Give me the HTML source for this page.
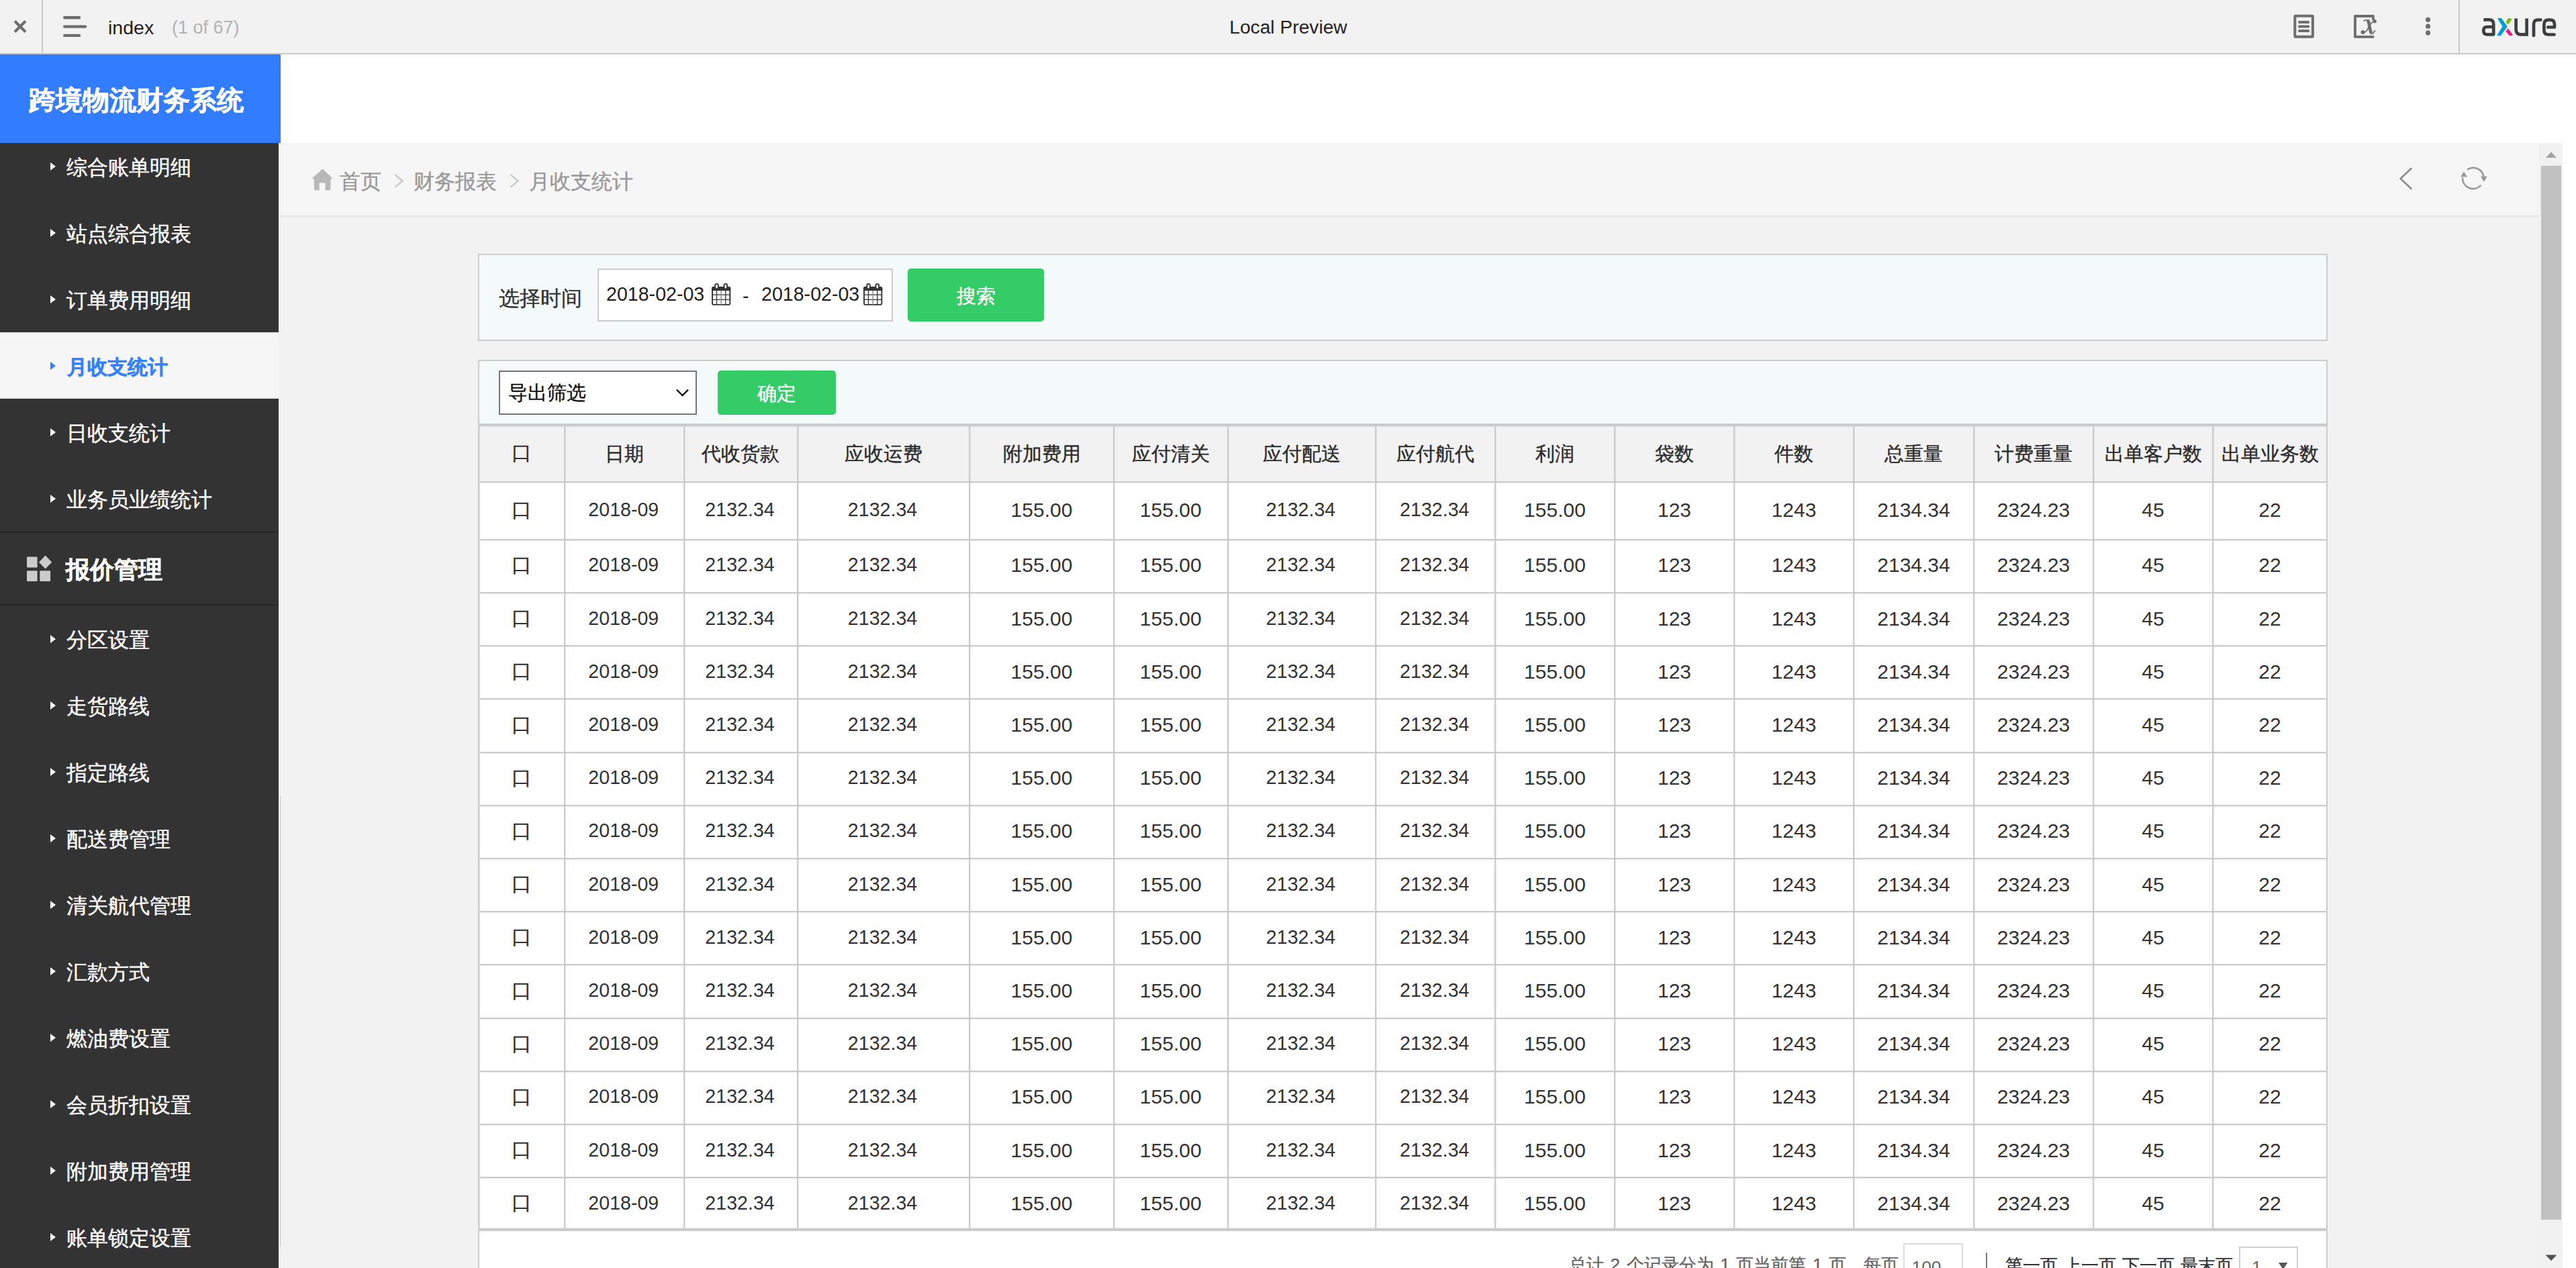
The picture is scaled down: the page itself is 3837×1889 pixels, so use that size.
<!DOCTYPE html><html lang="zh"><head><meta charset="utf-8"><title>index</title><style>
*{box-sizing:border-box;margin:0;padding:0}
html,body{width:3837px;height:1889px;overflow:hidden;background:#fff}
body{position:relative;font-family:"Liberation Sans",sans-serif;color:#333;-webkit-font-smoothing:antialiased}
.a{position:absolute}
.t{position:absolute;white-space:nowrap;line-height:1}
.c{text-align:center}
.mi{position:absolute;left:0;width:415px;height:99px}
.mi .tx{position:absolute;left:99px;top:36px;font-size:30.8px;line-height:31px;color:#fff;white-space:nowrap;-webkit-text-stroke-width:0.4px}
.mi .ar{position:absolute;left:75px;top:44px;width:0;height:0;border-left:8px solid #fff;border-top:6.5px solid transparent;border-bottom:6.5px solid transparent}
.mi.act{background:#f6f6f6;border-bottom:2px solid #e6e6e6}
.mi.act .tx{color:#3381ff;font-weight:bold;left:100px;font-size:30.4px}
.mi.act .ar{border-left-color:#3381ff}
.hl{position:absolute;height:2px;background:#cccccc}
.vl{position:absolute;width:2px;background:#cccccc}
.cell{position:absolute;text-align:center;white-space:nowrap;color:#333}
.cb{font-size:30px;-webkit-text-stroke-width:0.3px}
.k{-webkit-text-stroke-width:0.35px}
.k5{-webkit-text-stroke-width:0.5px}
.ar1{font-size:28.6px}
.yh{font-size:30px}
.hd{font-size:28.6px;color:#2b2b2b;-webkit-text-stroke-width:0.35px}
</style></head><body>
<div class="a" style="left:0;top:0;width:3837px;height:79px;background:#f2f2f2"></div>
<div class="a" style="left:0;top:79px;width:3837px;height:2px;background:#c8c8c8"></div>
<div class="a" style="left:62px;top:0;width:2px;height:79px;background:#c8c8c8"></div>
<div class="a" style="left:3662px;top:0;width:2px;height:79px;background:#c8c8c8"></div>
<svg class="a" style="left:16px;top:24.6px" width="28" height="28" viewBox="0 0 28 28"><path d="M6 6.5 L22 22.5 M22 6.5 L6 22.5" stroke="#6e6e6e" stroke-width="4.2" fill="none"/></svg>
<svg class="a" style="left:90px;top:20px" width="44" height="40" viewBox="0 0 44 40"><g stroke="#6e6e6e" stroke-width="4.4" stroke-linecap="round"><path d="M6.2 6.3H28"/><path d="M6.2 19.6H37"/><path d="M6.2 32.9H28"/></g></svg>
<div class="t" style="left:161px;top:25px;font-size:28.5px;line-height:32px;color:#222">index</div>
<div class="t" style="left:256px;top:25px;font-size:27px;line-height:32px;color:#b3b3b3">(1 of 67)</div>
<div class="t c" style="left:1719px;width:400px;top:24px;font-size:28.2px;line-height:32px;color:#222">Local Preview</div>
<svg class="a" style="left:3412px;top:18px" width="40" height="44" viewBox="0 0 40 44"><rect x="6.3" y="5.8" width="26.6" height="31" rx="1" fill="none" stroke="#6e6e6e" stroke-width="4"/><g stroke="#6e6e6e" stroke-width="4" stroke-linecap="round"><path d="M13 14.9H26.2"/><path d="M13 21.55H26.2"/><path d="M13 27.95H26.2"/></g></svg>
<svg class="a" style="left:3496px;top:14px" width="60" height="50" viewBox="0 0 60 50">
<path d="M38.9 14.5 V10 H11.95 V40.9 H38.7" fill="none" stroke="#6e6e6e" stroke-width="3.8" stroke-linejoin="round" stroke-linecap="round"/>
<g fill="none" stroke="#6e6e6e">
<path d="M24.4 16.8 Q28 16.7 30.6 15.7" stroke-width="1.8"/>
<path d="M30.9 15.6 C33.2 20 33.2 27 35.7 35.2" stroke-width="4.7"/>
<path d="M34.6 35.4 Q37.6 38.4 41.7 31.2" stroke-width="1.9"/>
<path d="M41 17.4 C37 18 34.6 22 32.6 26 C30.2 30.6 28 34.8 23.6 34.6" stroke-width="1.8"/>
</g>
<circle cx="41.2" cy="17.8" r="2.7" fill="#6e6e6e"/><circle cx="23.4" cy="34.1" r="3" fill="#6e6e6e"/>
</svg>
<svg class="a" style="left:3608px;top:20px" width="18" height="40" viewBox="0 0 18 40"><g fill="#6e6e6e"><circle cx="8.5" cy="9.3" r="3.6"/><circle cx="8.5" cy="19.2" r="3.6"/><circle cx="8.5" cy="28.9" r="3.6"/></g></svg>
<svg class="a" style="left:3694px;top:22px" width="122" height="38" viewBox="0 0 122 38">
<g fill="none" stroke="#3d3f40" stroke-width="4.7" stroke-linejoin="round">
<path d="M5.4 7.3 H13.6 Q20.2 7.3 20.2 14 V29.3 H10.6 Q5.2 29.3 5.2 23.6 Q5.2 18 10.6 18 H20"/>
<path d="M53.6 5.5 V22 Q53.6 29.4 61 29.4 H69.6 M69.6 5.5 V31.7"/>
<path d="M80 31 V14 Q80 7.6 86.4 7.6 H90.4" stroke-linecap="round"/>
<path d="M110.6 29.5 H102 Q95.4 29.5 95.4 23 V14.2 Q95.4 7.6 102 7.6 H104.4 Q111 7.6 111 14.2 V18.5 H101.2" stroke-linecap="round"/>
</g>
<path d="M26.8 5.5 H31.7 L40.3 17.5 L30.7 30.7 H25.8 L33.9 17.5 Z" fill="#009cd9" stroke="#009cd9" stroke-width="1" stroke-linejoin="round"/>
<path d="M47.1 6.5 L42.5 5.4 L39 10.5 L41.9 14.1 Z" fill="#74bb11" stroke="#74bb11" stroke-width="1" stroke-linejoin="round"/>
<path d="M41.7 20.9 L39 24.3 L43.7 30.7 L48.1 30.4 L47.9 29 Z" fill="#eb2084" stroke="#eb2084" stroke-width="1" stroke-linejoin="round"/>
</svg>
<div class="a" style="left:415px;top:213px;width:3367px;height:1676px;background:#f2f2f2"></div>
<div class="a" style="left:418px;top:213px;width:3364px;height:108px;background:#f6f6f6"></div>
<div class="a" style="left:418px;top:321px;width:3364px;height:2px;background:#e6e6e6"></div>
<div class="a" style="left:417px;top:1186px;width:1px;height:671px;background:#c6c6c6"></div>
<div class="a" style="left:0;top:213px;width:415px;height:1676px;background:#333;overflow:hidden">
<div class="mi" style="top:-15px"><div class="ar"></div><div class="tx">综合账单明细</div></div>
<div class="mi" style="top:84px"><div class="ar"></div><div class="tx">站点综合报表</div></div>
<div class="mi" style="top:183px"><div class="ar"></div><div class="tx">订单费用明细</div></div>
<div class="mi act" style="top:282px"><div class="a" style="left:0;top:1px;width:415px;height:1px;background:#e6e6e6"></div><div class="ar"></div><div class="tx">月收支统计</div></div>
<div class="mi" style="top:381px"><div class="ar"></div><div class="tx">日收支统计</div></div>
<div class="mi" style="top:480px"><div class="ar"></div><div class="tx">业务员业绩统计</div></div>
<div class="a" style="left:0;top:579px;width:415px;height:2px;background:#262626"></div>
<div class="a" style="left:0;top:687px;width:415px;height:2px;background:#262626"></div>
<svg class="a" style="left:38px;top:612px" width="42" height="44" viewBox="0 0 42 44"><g fill="#cbcbcb"><rect x="2" y="4.4" width="15.6" height="16" rx="1"/><rect x="2" y="25.3" width="15.6" height="15.8" rx="1"/><rect x="21.3" y="25.3" width="15.8" height="15.8" rx="1"/><path d="M29.6 2.6 L39.2 12.6 L29.6 22.4 L20 12.6 Z"/></g></svg>
<div class="t k5" style="left:98px;top:618px;font-size:35.8px;line-height:36px;font-weight:bold;color:#fff">报价管理</div>
<div class="mi" style="top:689px"><div class="ar"></div><div class="tx">分区设置</div></div>
<div class="mi" style="top:788px"><div class="ar"></div><div class="tx">走货路线</div></div>
<div class="mi" style="top:887px"><div class="ar"></div><div class="tx">指定路线</div></div>
<div class="mi" style="top:986px"><div class="ar"></div><div class="tx">配送费管理</div></div>
<div class="mi" style="top:1085px"><div class="ar"></div><div class="tx">清关航代管理</div></div>
<div class="mi" style="top:1184px"><div class="ar"></div><div class="tx">汇款方式</div></div>
<div class="mi" style="top:1283px"><div class="ar"></div><div class="tx">燃油费设置</div></div>
<div class="mi" style="top:1382px"><div class="ar"></div><div class="tx">会员折扣设置</div></div>
<div class="mi" style="top:1481px"><div class="ar"></div><div class="tx">附加费用管理</div></div>
<div class="mi" style="top:1580px"><div class="ar"></div><div class="tx">账单锁定设置</div></div>
</div>
<div class="a" style="left:0;top:81px;width:418px;height:132px;background:#317cff"></div>
<div class="t k5" style="left:43px;top:128px;font-size:39.8px;line-height:42px;font-weight:bold;color:#fff">跨境物流财务系统</div>
<svg class="a" style="left:462px;top:250px" width="36" height="36" viewBox="0 0 36 36"><path d="M17.5 2.6 Q18.6 1.6 19.7 2.6 L32.6 15.2 Q33.4 16.4 32 16.6 H30.4 V31.2 Q30.4 33.6 28 33.6 H22.6 V22.6 H13.6 V33.6 H8 Q5.8 33.6 5.8 31.2 V16.6 H4 Q2.6 16.4 3.4 15.2 Z" fill="#b8b8b8"/></svg>
<div class="t k" style="left:506px;top:255px;font-size:30.8px;line-height:32px;color:#999">首页</div>
<svg class="a" style="left:584px;top:256px" width="20" height="28" viewBox="0 0 20 28"><path d="M4.5 4 L15.5 13.6 L4.5 23" fill="none" stroke="#cfcfcf" stroke-width="2.8"/></svg>
<div class="t k" style="left:616px;top:255px;font-size:30.8px;line-height:32px;color:#999">财务报表</div>
<svg class="a" style="left:756px;top:256px" width="20" height="28" viewBox="0 0 20 28"><path d="M4.5 4 L15.5 13.6 L4.5 23" fill="none" stroke="#cfcfcf" stroke-width="2.8"/></svg>
<div class="t k" style="left:788px;top:255px;font-size:30.8px;line-height:32px;color:#999">月收支统计</div>
<svg class="a" style="left:3568px;top:244px" width="30" height="44" viewBox="0 0 30 44"><path d="M23.4 7.2 L7.6 22 L23.4 37" fill="none" stroke="#8c8c8c" stroke-width="2.6" stroke-linecap="round" stroke-linejoin="round"/></svg>
<svg class="a" style="left:3660px;top:244px" width="50" height="44" viewBox="0 0 50 44">
<g fill="none" stroke="#999" stroke-width="2.7" stroke-linecap="round">
<path d="M16 8.2 A15.6 15.6 0 0 1 39.4 19"/>
<path d="M8 21.8 A15.6 15.6 0 0 0 34.6 32.6"/>
</g>
<path d="M5.1 19.6 L15 19.6 L9.8 11.5 Z" fill="#999"/>
<path d="M34.9 19 L44.7 19 L39.9 26.8 Z" fill="#999"/>
</svg>
<div class="a" style="left:3782px;top:213px;width:35px;height:1676px;background:#f1f1f1"></div>
<div class="a" style="left:3785px;top:247px;width:30px;height:1570px;background:#c1c1c1"></div>
<svg class="a" style="left:3782px;top:213px" width="35" height="35" viewBox="0 0 35 35"><path d="M10 22 L18 13.6 L26 22 Z" fill="#a3a3a3"/></svg>
<svg class="a" style="left:3782px;top:1854px" width="35" height="35" viewBox="0 0 35 35"><path d="M9.6 15.4 L26.4 15.4 L18 24.2 Z" fill="#505050"/></svg>
<div class="a" style="left:712px;top:378px;width:2755px;height:130px;background:#f4fafa;border:2px solid #cccccc"></div>
<div class="t k" style="left:743px;top:429px;font-size:30.8px;line-height:32px;color:#333">选择时间</div>
<div class="a" style="left:890px;top:400px;width:440px;height:79px;background:#fff;border:2px solid #cccccc"></div>
<div class="t" style="left:903px;top:422px;font-size:28.6px;line-height:32px;color:#222">2018-02-03</div>
<div class="t" style="left:1106px;top:425px;font-size:28.6px;line-height:32px;color:#222">-</div>
<div class="t" style="left:1134px;top:422px;font-size:28.6px;line-height:32px;color:#222">2018-02-03</div>
<svg class="a" style="left:1059px;top:420px" width="32" height="36" viewBox="0 0 32 36">
<rect x="2.05" y="7.95" width="26.3" height="25.9" rx="2.2" fill="#fff" stroke="#333" stroke-width="1.9"/>
<path d="M1.1 13 V9.4 Q1.1 7 3.5 7 H26.9 Q29.3 7 29.3 9.4 V13 Z" fill="#333"/>
<g stroke="#333" stroke-width="1.3"><path d="M8.5 13V34M21.8 13V34M2 19.2H28.4M2 26.3H28.4"/></g>
<path d="M15.2 13V34" stroke="#8a8a8a" stroke-width="1.4"/>
<g stroke="#333" stroke-width="1.9" fill="#fff"><rect x="6.25" y="2.85" width="4.6" height="7.6" rx="2.3"/><rect x="19.5" y="2.85" width="4.6" height="7.6" rx="2.3"/></g>
</svg>
<svg class="a" style="left:1285px;top:420px" width="32" height="36" viewBox="0 0 32 36">
<rect x="2.05" y="7.95" width="26.3" height="25.9" rx="2.2" fill="#fff" stroke="#333" stroke-width="1.9"/>
<path d="M1.1 13 V9.4 Q1.1 7 3.5 7 H26.9 Q29.3 7 29.3 9.4 V13 Z" fill="#333"/>
<g stroke="#333" stroke-width="1.3"><path d="M8.5 13V34M21.8 13V34M2 19.2H28.4M2 26.3H28.4"/></g>
<path d="M15.2 13V34" stroke="#8a8a8a" stroke-width="1.4"/>
<g stroke="#333" stroke-width="1.9" fill="#fff"><rect x="6.25" y="2.85" width="4.6" height="7.6" rx="2.3"/><rect x="19.5" y="2.85" width="4.6" height="7.6" rx="2.3"/></g>
</svg>
<div class="a" style="left:1352px;top:400px;width:203px;height:79px;background:#33cc66;border-radius:5px"></div>
<div class="t c k" style="left:1352px;width:203px;top:425px;font-size:28.6px;line-height:32px;color:#fff">搜索</div>
<div class="a" style="left:712px;top:536px;width:2755px;height:98px;background:#f4fafa;border:2px solid #cccccc"></div>
<div class="a" style="left:743px;top:552px;width:295px;height:66px;background:#fff;border:2px solid #767676;border-radius:0"></div>
<div class="t k" style="left:757px;top:569px;font-size:28.6px;line-height:32px;color:#111">导出筛选</div>
<svg class="a" style="left:1003px;top:574px" width="28" height="22" viewBox="0 0 28 22"><path d="M5 6.6 L13.6 15 L22 6.6" fill="none" stroke="#111" stroke-width="2.4"/></svg>
<div class="a" style="left:1069px;top:552px;width:176px;height:66px;background:#33cc66;border-radius:5px"></div>
<div class="t c k" style="left:1069px;width:176px;top:570px;font-size:28.6px;line-height:32px;color:#fff">确定</div>
<div class="a" style="left:714px;top:635px;width:2752px;height:82px;background:#f2f2f2"></div>
<div class="a" style="left:714px;top:719px;width:2752px;height:1170px;background:#fff"></div>
<div class="hl" style="left:712px;top:631px;width:2755px;height:4px;background:#cbcbcb"></div>
<div class="hl" style="left:714px;top:635px;width:2752px;height:1px;background:#e3e3e3"></div>
<div class="hl" style="left:712px;top:717px;width:2755px"></div>
<div class="a" style="left:714px;top:719px;width:2751px;height:1px;background:rgba(0,0,0,0.07)"></div>
<div class="hl" style="left:712px;top:803px;width:2755px"></div>
<div class="a" style="left:714px;top:805px;width:2751px;height:1px;background:rgba(0,0,0,0.07)"></div>
<div class="hl" style="left:712px;top:882px;width:2755px"></div>
<div class="a" style="left:714px;top:884px;width:2751px;height:1px;background:rgba(0,0,0,0.07)"></div>
<div class="hl" style="left:712px;top:961px;width:2755px"></div>
<div class="a" style="left:714px;top:963px;width:2751px;height:1px;background:rgba(0,0,0,0.07)"></div>
<div class="hl" style="left:712px;top:1040px;width:2755px"></div>
<div class="a" style="left:714px;top:1042px;width:2751px;height:1px;background:rgba(0,0,0,0.07)"></div>
<div class="hl" style="left:712px;top:1120px;width:2755px"></div>
<div class="a" style="left:714px;top:1122px;width:2751px;height:1px;background:rgba(0,0,0,0.07)"></div>
<div class="hl" style="left:712px;top:1199px;width:2755px"></div>
<div class="a" style="left:714px;top:1201px;width:2751px;height:1px;background:rgba(0,0,0,0.07)"></div>
<div class="hl" style="left:712px;top:1278px;width:2755px"></div>
<div class="a" style="left:714px;top:1280px;width:2751px;height:1px;background:rgba(0,0,0,0.07)"></div>
<div class="hl" style="left:712px;top:1357px;width:2755px"></div>
<div class="a" style="left:714px;top:1359px;width:2751px;height:1px;background:rgba(0,0,0,0.07)"></div>
<div class="hl" style="left:712px;top:1436px;width:2755px"></div>
<div class="a" style="left:714px;top:1438px;width:2751px;height:1px;background:rgba(0,0,0,0.07)"></div>
<div class="hl" style="left:712px;top:1516px;width:2755px"></div>
<div class="a" style="left:714px;top:1518px;width:2751px;height:1px;background:rgba(0,0,0,0.07)"></div>
<div class="hl" style="left:712px;top:1595px;width:2755px"></div>
<div class="a" style="left:714px;top:1597px;width:2751px;height:1px;background:rgba(0,0,0,0.07)"></div>
<div class="hl" style="left:712px;top:1674px;width:2755px"></div>
<div class="a" style="left:714px;top:1676px;width:2751px;height:1px;background:rgba(0,0,0,0.07)"></div>
<div class="hl" style="left:712px;top:1753px;width:2755px"></div>
<div class="a" style="left:714px;top:1755px;width:2751px;height:1px;background:rgba(0,0,0,0.07)"></div>
<div class="a" style="left:714px;top:1829px;width:2751px;height:1px;background:rgba(0,0,0,0.09)"></div>
<div class="hl" style="left:712px;top:1830px;width:2755px;height:4px;background:#cbcbcb"></div>
<div class="vl" style="left:712px;top:631px;height:1258px"></div>
<div class="vl" style="left:840px;top:633px;height:1199px"></div>
<div class="a" style="left:842px;top:635px;width:1px;height:1195px;background:rgba(0,0,0,0.07)"></div>
<div class="vl" style="left:1018px;top:633px;height:1199px"></div>
<div class="a" style="left:1020px;top:635px;width:1px;height:1195px;background:rgba(0,0,0,0.07)"></div>
<div class="vl" style="left:1187px;top:633px;height:1199px"></div>
<div class="a" style="left:1189px;top:635px;width:1px;height:1195px;background:rgba(0,0,0,0.07)"></div>
<div class="vl" style="left:1443px;top:633px;height:1199px"></div>
<div class="a" style="left:1445px;top:635px;width:1px;height:1195px;background:rgba(0,0,0,0.07)"></div>
<div class="vl" style="left:1658px;top:633px;height:1199px"></div>
<div class="a" style="left:1660px;top:635px;width:1px;height:1195px;background:rgba(0,0,0,0.07)"></div>
<div class="vl" style="left:1828px;top:633px;height:1199px"></div>
<div class="a" style="left:1830px;top:635px;width:1px;height:1195px;background:rgba(0,0,0,0.07)"></div>
<div class="vl" style="left:2048px;top:633px;height:1199px"></div>
<div class="a" style="left:2050px;top:635px;width:1px;height:1195px;background:rgba(0,0,0,0.07)"></div>
<div class="vl" style="left:2226px;top:633px;height:1199px"></div>
<div class="a" style="left:2228px;top:635px;width:1px;height:1195px;background:rgba(0,0,0,0.07)"></div>
<div class="vl" style="left:2404px;top:633px;height:1199px"></div>
<div class="a" style="left:2406px;top:635px;width:1px;height:1195px;background:rgba(0,0,0,0.07)"></div>
<div class="vl" style="left:2582px;top:633px;height:1199px"></div>
<div class="a" style="left:2584px;top:635px;width:1px;height:1195px;background:rgba(0,0,0,0.07)"></div>
<div class="vl" style="left:2760px;top:633px;height:1199px"></div>
<div class="a" style="left:2762px;top:635px;width:1px;height:1195px;background:rgba(0,0,0,0.07)"></div>
<div class="vl" style="left:2939px;top:633px;height:1199px"></div>
<div class="a" style="left:2941px;top:635px;width:1px;height:1195px;background:rgba(0,0,0,0.07)"></div>
<div class="vl" style="left:3117px;top:633px;height:1199px"></div>
<div class="a" style="left:3119px;top:635px;width:1px;height:1195px;background:rgba(0,0,0,0.07)"></div>
<div class="vl" style="left:3295px;top:633px;height:1199px"></div>
<div class="a" style="left:3297px;top:635px;width:1px;height:1195px;background:rgba(0,0,0,0.07)"></div>
<div class="vl" style="left:3465px;top:631px;height:1258px"></div>
<div class="a" style="left:714px;top:635px;width:1px;height:1195px;background:#e3e3e3"></div>
<div class="cell cb" style="left:713.0px;width:128.0px;top:658.0px;line-height:34px">口</div>
<div class="cell hd" style="left:841.0px;width:178.0px;top:658.5px;line-height:34px">日期</div>
<div class="cell hd" style="left:1019.0px;width:168.5px;top:658.5px;line-height:34px">代收货款</div>
<div class="cell hd" style="left:1187.5px;width:256.5px;top:658.5px;line-height:34px">应收运费</div>
<div class="cell hd" style="left:1444.0px;width:215.0px;top:658.5px;line-height:34px">附加费用</div>
<div class="cell hd" style="left:1659.0px;width:169.5px;top:658.5px;line-height:34px">应付清关</div>
<div class="cell hd" style="left:1828.5px;width:220.5px;top:658.5px;line-height:34px">应付配送</div>
<div class="cell hd" style="left:2049.0px;width:178.0px;top:658.5px;line-height:34px">应付航代</div>
<div class="cell hd" style="left:2227.0px;width:178.0px;top:658.5px;line-height:34px">利润</div>
<div class="cell hd" style="left:2405.0px;width:178.0px;top:658.5px;line-height:34px">袋数</div>
<div class="cell hd" style="left:2583.0px;width:178.0px;top:658.5px;line-height:34px">件数</div>
<div class="cell hd" style="left:2761.0px;width:179.0px;top:658.5px;line-height:34px">总重量</div>
<div class="cell hd" style="left:2940.0px;width:178.0px;top:658.5px;line-height:34px">计费重量</div>
<div class="cell hd" style="left:3118.0px;width:178.0px;top:658.5px;line-height:34px">出单客户数</div>
<div class="cell hd" style="left:3296.0px;width:170.0px;top:658.5px;line-height:34px">出单业务数</div>
<div class="cell cb" style="left:713.0px;width:128.0px;top:742.8px;line-height:34px">口</div>
<div class="cell ar1" style="left:839.8px;width:178.0px;top:742.3px;line-height:34px">2018-09</div>
<div class="cell ar1" style="left:1017.8px;width:168.5px;top:742.3px;line-height:34px">2132.34</div>
<div class="cell ar1" style="left:1186.3px;width:256.5px;top:742.3px;line-height:34px">2132.34</div>
<div class="cell yh" style="left:1444.0px;width:215.0px;top:743.3px;line-height:34px">155.00</div>
<div class="cell yh" style="left:1659.0px;width:169.5px;top:743.3px;line-height:34px">155.00</div>
<div class="cell ar1" style="left:1827.3px;width:220.5px;top:742.3px;line-height:34px">2132.34</div>
<div class="cell ar1" style="left:2047.8px;width:178.0px;top:742.3px;line-height:34px">2132.34</div>
<div class="cell yh" style="left:2227.0px;width:178.0px;top:743.3px;line-height:34px">155.00</div>
<div class="cell yh" style="left:2405.0px;width:178.0px;top:743.3px;line-height:34px">123</div>
<div class="cell yh" style="left:2583.0px;width:178.0px;top:743.3px;line-height:34px">1243</div>
<div class="cell yh" style="left:2761.0px;width:179.0px;top:743.3px;line-height:34px">2134.34</div>
<div class="cell yh" style="left:2940.0px;width:178.0px;top:743.3px;line-height:34px">2324.23</div>
<div class="cell yh" style="left:3118.0px;width:178.0px;top:743.3px;line-height:34px">45</div>
<div class="cell yh" style="left:3296.0px;width:170.0px;top:743.3px;line-height:34px">22</div>
<div class="cell cb" style="left:713.0px;width:128.0px;top:824.9px;line-height:34px">口</div>
<div class="cell ar1" style="left:839.8px;width:178.0px;top:824.4px;line-height:34px">2018-09</div>
<div class="cell ar1" style="left:1017.8px;width:168.5px;top:824.4px;line-height:34px">2132.34</div>
<div class="cell ar1" style="left:1186.3px;width:256.5px;top:824.4px;line-height:34px">2132.34</div>
<div class="cell yh" style="left:1444.0px;width:215.0px;top:825.4px;line-height:34px">155.00</div>
<div class="cell yh" style="left:1659.0px;width:169.5px;top:825.4px;line-height:34px">155.00</div>
<div class="cell ar1" style="left:1827.3px;width:220.5px;top:824.4px;line-height:34px">2132.34</div>
<div class="cell ar1" style="left:2047.8px;width:178.0px;top:824.4px;line-height:34px">2132.34</div>
<div class="cell yh" style="left:2227.0px;width:178.0px;top:825.4px;line-height:34px">155.00</div>
<div class="cell yh" style="left:2405.0px;width:178.0px;top:825.4px;line-height:34px">123</div>
<div class="cell yh" style="left:2583.0px;width:178.0px;top:825.4px;line-height:34px">1243</div>
<div class="cell yh" style="left:2761.0px;width:179.0px;top:825.4px;line-height:34px">2134.34</div>
<div class="cell yh" style="left:2940.0px;width:178.0px;top:825.4px;line-height:34px">2324.23</div>
<div class="cell yh" style="left:3118.0px;width:178.0px;top:825.4px;line-height:34px">45</div>
<div class="cell yh" style="left:3296.0px;width:170.0px;top:825.4px;line-height:34px">22</div>
<div class="cell cb" style="left:713.0px;width:128.0px;top:904.1px;line-height:34px">口</div>
<div class="cell ar1" style="left:839.8px;width:178.0px;top:903.6px;line-height:34px">2018-09</div>
<div class="cell ar1" style="left:1017.8px;width:168.5px;top:903.6px;line-height:34px">2132.34</div>
<div class="cell ar1" style="left:1186.3px;width:256.5px;top:903.6px;line-height:34px">2132.34</div>
<div class="cell yh" style="left:1444.0px;width:215.0px;top:904.6px;line-height:34px">155.00</div>
<div class="cell yh" style="left:1659.0px;width:169.5px;top:904.6px;line-height:34px">155.00</div>
<div class="cell ar1" style="left:1827.3px;width:220.5px;top:903.6px;line-height:34px">2132.34</div>
<div class="cell ar1" style="left:2047.8px;width:178.0px;top:903.6px;line-height:34px">2132.34</div>
<div class="cell yh" style="left:2227.0px;width:178.0px;top:904.6px;line-height:34px">155.00</div>
<div class="cell yh" style="left:2405.0px;width:178.0px;top:904.6px;line-height:34px">123</div>
<div class="cell yh" style="left:2583.0px;width:178.0px;top:904.6px;line-height:34px">1243</div>
<div class="cell yh" style="left:2761.0px;width:179.0px;top:904.6px;line-height:34px">2134.34</div>
<div class="cell yh" style="left:2940.0px;width:178.0px;top:904.6px;line-height:34px">2324.23</div>
<div class="cell yh" style="left:3118.0px;width:178.0px;top:904.6px;line-height:34px">45</div>
<div class="cell yh" style="left:3296.0px;width:170.0px;top:904.6px;line-height:34px">22</div>
<div class="cell cb" style="left:713.0px;width:128.0px;top:983.3px;line-height:34px">口</div>
<div class="cell ar1" style="left:839.8px;width:178.0px;top:982.8px;line-height:34px">2018-09</div>
<div class="cell ar1" style="left:1017.8px;width:168.5px;top:982.8px;line-height:34px">2132.34</div>
<div class="cell ar1" style="left:1186.3px;width:256.5px;top:982.8px;line-height:34px">2132.34</div>
<div class="cell yh" style="left:1444.0px;width:215.0px;top:983.8px;line-height:34px">155.00</div>
<div class="cell yh" style="left:1659.0px;width:169.5px;top:983.8px;line-height:34px">155.00</div>
<div class="cell ar1" style="left:1827.3px;width:220.5px;top:982.8px;line-height:34px">2132.34</div>
<div class="cell ar1" style="left:2047.8px;width:178.0px;top:982.8px;line-height:34px">2132.34</div>
<div class="cell yh" style="left:2227.0px;width:178.0px;top:983.8px;line-height:34px">155.00</div>
<div class="cell yh" style="left:2405.0px;width:178.0px;top:983.8px;line-height:34px">123</div>
<div class="cell yh" style="left:2583.0px;width:178.0px;top:983.8px;line-height:34px">1243</div>
<div class="cell yh" style="left:2761.0px;width:179.0px;top:983.8px;line-height:34px">2134.34</div>
<div class="cell yh" style="left:2940.0px;width:178.0px;top:983.8px;line-height:34px">2324.23</div>
<div class="cell yh" style="left:3118.0px;width:178.0px;top:983.8px;line-height:34px">45</div>
<div class="cell yh" style="left:3296.0px;width:170.0px;top:983.8px;line-height:34px">22</div>
<div class="cell cb" style="left:713.0px;width:128.0px;top:1062.5px;line-height:34px">口</div>
<div class="cell ar1" style="left:839.8px;width:178.0px;top:1062.0px;line-height:34px">2018-09</div>
<div class="cell ar1" style="left:1017.8px;width:168.5px;top:1062.0px;line-height:34px">2132.34</div>
<div class="cell ar1" style="left:1186.3px;width:256.5px;top:1062.0px;line-height:34px">2132.34</div>
<div class="cell yh" style="left:1444.0px;width:215.0px;top:1063.0px;line-height:34px">155.00</div>
<div class="cell yh" style="left:1659.0px;width:169.5px;top:1063.0px;line-height:34px">155.00</div>
<div class="cell ar1" style="left:1827.3px;width:220.5px;top:1062.0px;line-height:34px">2132.34</div>
<div class="cell ar1" style="left:2047.8px;width:178.0px;top:1062.0px;line-height:34px">2132.34</div>
<div class="cell yh" style="left:2227.0px;width:178.0px;top:1063.0px;line-height:34px">155.00</div>
<div class="cell yh" style="left:2405.0px;width:178.0px;top:1063.0px;line-height:34px">123</div>
<div class="cell yh" style="left:2583.0px;width:178.0px;top:1063.0px;line-height:34px">1243</div>
<div class="cell yh" style="left:2761.0px;width:179.0px;top:1063.0px;line-height:34px">2134.34</div>
<div class="cell yh" style="left:2940.0px;width:178.0px;top:1063.0px;line-height:34px">2324.23</div>
<div class="cell yh" style="left:3118.0px;width:178.0px;top:1063.0px;line-height:34px">45</div>
<div class="cell yh" style="left:3296.0px;width:170.0px;top:1063.0px;line-height:34px">22</div>
<div class="cell cb" style="left:713.0px;width:128.0px;top:1141.7px;line-height:34px">口</div>
<div class="cell ar1" style="left:839.8px;width:178.0px;top:1141.2px;line-height:34px">2018-09</div>
<div class="cell ar1" style="left:1017.8px;width:168.5px;top:1141.2px;line-height:34px">2132.34</div>
<div class="cell ar1" style="left:1186.3px;width:256.5px;top:1141.2px;line-height:34px">2132.34</div>
<div class="cell yh" style="left:1444.0px;width:215.0px;top:1142.2px;line-height:34px">155.00</div>
<div class="cell yh" style="left:1659.0px;width:169.5px;top:1142.2px;line-height:34px">155.00</div>
<div class="cell ar1" style="left:1827.3px;width:220.5px;top:1141.2px;line-height:34px">2132.34</div>
<div class="cell ar1" style="left:2047.8px;width:178.0px;top:1141.2px;line-height:34px">2132.34</div>
<div class="cell yh" style="left:2227.0px;width:178.0px;top:1142.2px;line-height:34px">155.00</div>
<div class="cell yh" style="left:2405.0px;width:178.0px;top:1142.2px;line-height:34px">123</div>
<div class="cell yh" style="left:2583.0px;width:178.0px;top:1142.2px;line-height:34px">1243</div>
<div class="cell yh" style="left:2761.0px;width:179.0px;top:1142.2px;line-height:34px">2134.34</div>
<div class="cell yh" style="left:2940.0px;width:178.0px;top:1142.2px;line-height:34px">2324.23</div>
<div class="cell yh" style="left:3118.0px;width:178.0px;top:1142.2px;line-height:34px">45</div>
<div class="cell yh" style="left:3296.0px;width:170.0px;top:1142.2px;line-height:34px">22</div>
<div class="cell cb" style="left:713.0px;width:128.0px;top:1220.9px;line-height:34px">口</div>
<div class="cell ar1" style="left:839.8px;width:178.0px;top:1220.4px;line-height:34px">2018-09</div>
<div class="cell ar1" style="left:1017.8px;width:168.5px;top:1220.4px;line-height:34px">2132.34</div>
<div class="cell ar1" style="left:1186.3px;width:256.5px;top:1220.4px;line-height:34px">2132.34</div>
<div class="cell yh" style="left:1444.0px;width:215.0px;top:1221.4px;line-height:34px">155.00</div>
<div class="cell yh" style="left:1659.0px;width:169.5px;top:1221.4px;line-height:34px">155.00</div>
<div class="cell ar1" style="left:1827.3px;width:220.5px;top:1220.4px;line-height:34px">2132.34</div>
<div class="cell ar1" style="left:2047.8px;width:178.0px;top:1220.4px;line-height:34px">2132.34</div>
<div class="cell yh" style="left:2227.0px;width:178.0px;top:1221.4px;line-height:34px">155.00</div>
<div class="cell yh" style="left:2405.0px;width:178.0px;top:1221.4px;line-height:34px">123</div>
<div class="cell yh" style="left:2583.0px;width:178.0px;top:1221.4px;line-height:34px">1243</div>
<div class="cell yh" style="left:2761.0px;width:179.0px;top:1221.4px;line-height:34px">2134.34</div>
<div class="cell yh" style="left:2940.0px;width:178.0px;top:1221.4px;line-height:34px">2324.23</div>
<div class="cell yh" style="left:3118.0px;width:178.0px;top:1221.4px;line-height:34px">45</div>
<div class="cell yh" style="left:3296.0px;width:170.0px;top:1221.4px;line-height:34px">22</div>
<div class="cell cb" style="left:713.0px;width:128.0px;top:1300.1px;line-height:34px">口</div>
<div class="cell ar1" style="left:839.8px;width:178.0px;top:1299.6px;line-height:34px">2018-09</div>
<div class="cell ar1" style="left:1017.8px;width:168.5px;top:1299.6px;line-height:34px">2132.34</div>
<div class="cell ar1" style="left:1186.3px;width:256.5px;top:1299.6px;line-height:34px">2132.34</div>
<div class="cell yh" style="left:1444.0px;width:215.0px;top:1300.6px;line-height:34px">155.00</div>
<div class="cell yh" style="left:1659.0px;width:169.5px;top:1300.6px;line-height:34px">155.00</div>
<div class="cell ar1" style="left:1827.3px;width:220.5px;top:1299.6px;line-height:34px">2132.34</div>
<div class="cell ar1" style="left:2047.8px;width:178.0px;top:1299.6px;line-height:34px">2132.34</div>
<div class="cell yh" style="left:2227.0px;width:178.0px;top:1300.6px;line-height:34px">155.00</div>
<div class="cell yh" style="left:2405.0px;width:178.0px;top:1300.6px;line-height:34px">123</div>
<div class="cell yh" style="left:2583.0px;width:178.0px;top:1300.6px;line-height:34px">1243</div>
<div class="cell yh" style="left:2761.0px;width:179.0px;top:1300.6px;line-height:34px">2134.34</div>
<div class="cell yh" style="left:2940.0px;width:178.0px;top:1300.6px;line-height:34px">2324.23</div>
<div class="cell yh" style="left:3118.0px;width:178.0px;top:1300.6px;line-height:34px">45</div>
<div class="cell yh" style="left:3296.0px;width:170.0px;top:1300.6px;line-height:34px">22</div>
<div class="cell cb" style="left:713.0px;width:128.0px;top:1379.3px;line-height:34px">口</div>
<div class="cell ar1" style="left:839.8px;width:178.0px;top:1378.8px;line-height:34px">2018-09</div>
<div class="cell ar1" style="left:1017.8px;width:168.5px;top:1378.8px;line-height:34px">2132.34</div>
<div class="cell ar1" style="left:1186.3px;width:256.5px;top:1378.8px;line-height:34px">2132.34</div>
<div class="cell yh" style="left:1444.0px;width:215.0px;top:1379.8px;line-height:34px">155.00</div>
<div class="cell yh" style="left:1659.0px;width:169.5px;top:1379.8px;line-height:34px">155.00</div>
<div class="cell ar1" style="left:1827.3px;width:220.5px;top:1378.8px;line-height:34px">2132.34</div>
<div class="cell ar1" style="left:2047.8px;width:178.0px;top:1378.8px;line-height:34px">2132.34</div>
<div class="cell yh" style="left:2227.0px;width:178.0px;top:1379.8px;line-height:34px">155.00</div>
<div class="cell yh" style="left:2405.0px;width:178.0px;top:1379.8px;line-height:34px">123</div>
<div class="cell yh" style="left:2583.0px;width:178.0px;top:1379.8px;line-height:34px">1243</div>
<div class="cell yh" style="left:2761.0px;width:179.0px;top:1379.8px;line-height:34px">2134.34</div>
<div class="cell yh" style="left:2940.0px;width:178.0px;top:1379.8px;line-height:34px">2324.23</div>
<div class="cell yh" style="left:3118.0px;width:178.0px;top:1379.8px;line-height:34px">45</div>
<div class="cell yh" style="left:3296.0px;width:170.0px;top:1379.8px;line-height:34px">22</div>
<div class="cell cb" style="left:713.0px;width:128.0px;top:1458.5px;line-height:34px">口</div>
<div class="cell ar1" style="left:839.8px;width:178.0px;top:1458.0px;line-height:34px">2018-09</div>
<div class="cell ar1" style="left:1017.8px;width:168.5px;top:1458.0px;line-height:34px">2132.34</div>
<div class="cell ar1" style="left:1186.3px;width:256.5px;top:1458.0px;line-height:34px">2132.34</div>
<div class="cell yh" style="left:1444.0px;width:215.0px;top:1459.0px;line-height:34px">155.00</div>
<div class="cell yh" style="left:1659.0px;width:169.5px;top:1459.0px;line-height:34px">155.00</div>
<div class="cell ar1" style="left:1827.3px;width:220.5px;top:1458.0px;line-height:34px">2132.34</div>
<div class="cell ar1" style="left:2047.8px;width:178.0px;top:1458.0px;line-height:34px">2132.34</div>
<div class="cell yh" style="left:2227.0px;width:178.0px;top:1459.0px;line-height:34px">155.00</div>
<div class="cell yh" style="left:2405.0px;width:178.0px;top:1459.0px;line-height:34px">123</div>
<div class="cell yh" style="left:2583.0px;width:178.0px;top:1459.0px;line-height:34px">1243</div>
<div class="cell yh" style="left:2761.0px;width:179.0px;top:1459.0px;line-height:34px">2134.34</div>
<div class="cell yh" style="left:2940.0px;width:178.0px;top:1459.0px;line-height:34px">2324.23</div>
<div class="cell yh" style="left:3118.0px;width:178.0px;top:1459.0px;line-height:34px">45</div>
<div class="cell yh" style="left:3296.0px;width:170.0px;top:1459.0px;line-height:34px">22</div>
<div class="cell cb" style="left:713.0px;width:128.0px;top:1537.7px;line-height:34px">口</div>
<div class="cell ar1" style="left:839.8px;width:178.0px;top:1537.2px;line-height:34px">2018-09</div>
<div class="cell ar1" style="left:1017.8px;width:168.5px;top:1537.2px;line-height:34px">2132.34</div>
<div class="cell ar1" style="left:1186.3px;width:256.5px;top:1537.2px;line-height:34px">2132.34</div>
<div class="cell yh" style="left:1444.0px;width:215.0px;top:1538.2px;line-height:34px">155.00</div>
<div class="cell yh" style="left:1659.0px;width:169.5px;top:1538.2px;line-height:34px">155.00</div>
<div class="cell ar1" style="left:1827.3px;width:220.5px;top:1537.2px;line-height:34px">2132.34</div>
<div class="cell ar1" style="left:2047.8px;width:178.0px;top:1537.2px;line-height:34px">2132.34</div>
<div class="cell yh" style="left:2227.0px;width:178.0px;top:1538.2px;line-height:34px">155.00</div>
<div class="cell yh" style="left:2405.0px;width:178.0px;top:1538.2px;line-height:34px">123</div>
<div class="cell yh" style="left:2583.0px;width:178.0px;top:1538.2px;line-height:34px">1243</div>
<div class="cell yh" style="left:2761.0px;width:179.0px;top:1538.2px;line-height:34px">2134.34</div>
<div class="cell yh" style="left:2940.0px;width:178.0px;top:1538.2px;line-height:34px">2324.23</div>
<div class="cell yh" style="left:3118.0px;width:178.0px;top:1538.2px;line-height:34px">45</div>
<div class="cell yh" style="left:3296.0px;width:170.0px;top:1538.2px;line-height:34px">22</div>
<div class="cell cb" style="left:713.0px;width:128.0px;top:1616.9px;line-height:34px">口</div>
<div class="cell ar1" style="left:839.8px;width:178.0px;top:1616.4px;line-height:34px">2018-09</div>
<div class="cell ar1" style="left:1017.8px;width:168.5px;top:1616.4px;line-height:34px">2132.34</div>
<div class="cell ar1" style="left:1186.3px;width:256.5px;top:1616.4px;line-height:34px">2132.34</div>
<div class="cell yh" style="left:1444.0px;width:215.0px;top:1617.4px;line-height:34px">155.00</div>
<div class="cell yh" style="left:1659.0px;width:169.5px;top:1617.4px;line-height:34px">155.00</div>
<div class="cell ar1" style="left:1827.3px;width:220.5px;top:1616.4px;line-height:34px">2132.34</div>
<div class="cell ar1" style="left:2047.8px;width:178.0px;top:1616.4px;line-height:34px">2132.34</div>
<div class="cell yh" style="left:2227.0px;width:178.0px;top:1617.4px;line-height:34px">155.00</div>
<div class="cell yh" style="left:2405.0px;width:178.0px;top:1617.4px;line-height:34px">123</div>
<div class="cell yh" style="left:2583.0px;width:178.0px;top:1617.4px;line-height:34px">1243</div>
<div class="cell yh" style="left:2761.0px;width:179.0px;top:1617.4px;line-height:34px">2134.34</div>
<div class="cell yh" style="left:2940.0px;width:178.0px;top:1617.4px;line-height:34px">2324.23</div>
<div class="cell yh" style="left:3118.0px;width:178.0px;top:1617.4px;line-height:34px">45</div>
<div class="cell yh" style="left:3296.0px;width:170.0px;top:1617.4px;line-height:34px">22</div>
<div class="cell cb" style="left:713.0px;width:128.0px;top:1696.1px;line-height:34px">口</div>
<div class="cell ar1" style="left:839.8px;width:178.0px;top:1695.6px;line-height:34px">2018-09</div>
<div class="cell ar1" style="left:1017.8px;width:168.5px;top:1695.6px;line-height:34px">2132.34</div>
<div class="cell ar1" style="left:1186.3px;width:256.5px;top:1695.6px;line-height:34px">2132.34</div>
<div class="cell yh" style="left:1444.0px;width:215.0px;top:1696.6px;line-height:34px">155.00</div>
<div class="cell yh" style="left:1659.0px;width:169.5px;top:1696.6px;line-height:34px">155.00</div>
<div class="cell ar1" style="left:1827.3px;width:220.5px;top:1695.6px;line-height:34px">2132.34</div>
<div class="cell ar1" style="left:2047.8px;width:178.0px;top:1695.6px;line-height:34px">2132.34</div>
<div class="cell yh" style="left:2227.0px;width:178.0px;top:1696.6px;line-height:34px">155.00</div>
<div class="cell yh" style="left:2405.0px;width:178.0px;top:1696.6px;line-height:34px">123</div>
<div class="cell yh" style="left:2583.0px;width:178.0px;top:1696.6px;line-height:34px">1243</div>
<div class="cell yh" style="left:2761.0px;width:179.0px;top:1696.6px;line-height:34px">2134.34</div>
<div class="cell yh" style="left:2940.0px;width:178.0px;top:1696.6px;line-height:34px">2324.23</div>
<div class="cell yh" style="left:3118.0px;width:178.0px;top:1696.6px;line-height:34px">45</div>
<div class="cell yh" style="left:3296.0px;width:170.0px;top:1696.6px;line-height:34px">22</div>
<div class="cell cb" style="left:713.0px;width:128.0px;top:1775.3px;line-height:34px">口</div>
<div class="cell ar1" style="left:839.8px;width:178.0px;top:1774.8px;line-height:34px">2018-09</div>
<div class="cell ar1" style="left:1017.8px;width:168.5px;top:1774.8px;line-height:34px">2132.34</div>
<div class="cell ar1" style="left:1186.3px;width:256.5px;top:1774.8px;line-height:34px">2132.34</div>
<div class="cell yh" style="left:1444.0px;width:215.0px;top:1775.8px;line-height:34px">155.00</div>
<div class="cell yh" style="left:1659.0px;width:169.5px;top:1775.8px;line-height:34px">155.00</div>
<div class="cell ar1" style="left:1827.3px;width:220.5px;top:1774.8px;line-height:34px">2132.34</div>
<div class="cell ar1" style="left:2047.8px;width:178.0px;top:1774.8px;line-height:34px">2132.34</div>
<div class="cell yh" style="left:2227.0px;width:178.0px;top:1775.8px;line-height:34px">155.00</div>
<div class="cell yh" style="left:2405.0px;width:178.0px;top:1775.8px;line-height:34px">123</div>
<div class="cell yh" style="left:2583.0px;width:178.0px;top:1775.8px;line-height:34px">1243</div>
<div class="cell yh" style="left:2761.0px;width:179.0px;top:1775.8px;line-height:34px">2134.34</div>
<div class="cell yh" style="left:2940.0px;width:178.0px;top:1775.8px;line-height:34px">2324.23</div>
<div class="cell yh" style="left:3118.0px;width:178.0px;top:1775.8px;line-height:34px">45</div>
<div class="cell yh" style="left:3296.0px;width:170.0px;top:1775.8px;line-height:34px">22</div>
<div class="t k" style="left:2337px;top:1869px;font-size:26.4px;line-height:30px;color:#666;word-spacing:2.2px">总计 2 个记录分为 1 页当前第 1 页，每页</div>
<div class="a" style="left:2835px;top:1852px;width:89px;height:60px;background:#fff;border:2px solid #ddd"></div>
<div class="t" style="left:2847.5px;top:1872.5px;font-size:26.4px;line-height:30px;color:#666">100</div>
<div class="a" style="left:2958px;top:1866px;width:2px;height:30px;background:#7a7a7a"></div>
<div class="t k" style="left:2987px;top:1870px;font-size:26.4px;line-height:30px;color:#333;word-spacing:1.8px">第一页 上一页 下一页 最末页</div>
<div class="a" style="left:3335px;top:1857px;width:88px;height:50px;background:#fff;border:2px solid #d0d0d0"></div>
<div class="t" style="left:3354px;top:1872.5px;font-size:26.4px;line-height:30px;color:#666">1</div>
<svg class="a" style="left:3392px;top:1879px" width="18" height="12" viewBox="0 0 18 12"><path d="M2 2 H15.4 L8.7 12 Z" fill="#555"/></svg>
<div class="a" style="left:3817px;top:81px;width:20px;height:1808px;background:#fff"></div>
</body></html>
